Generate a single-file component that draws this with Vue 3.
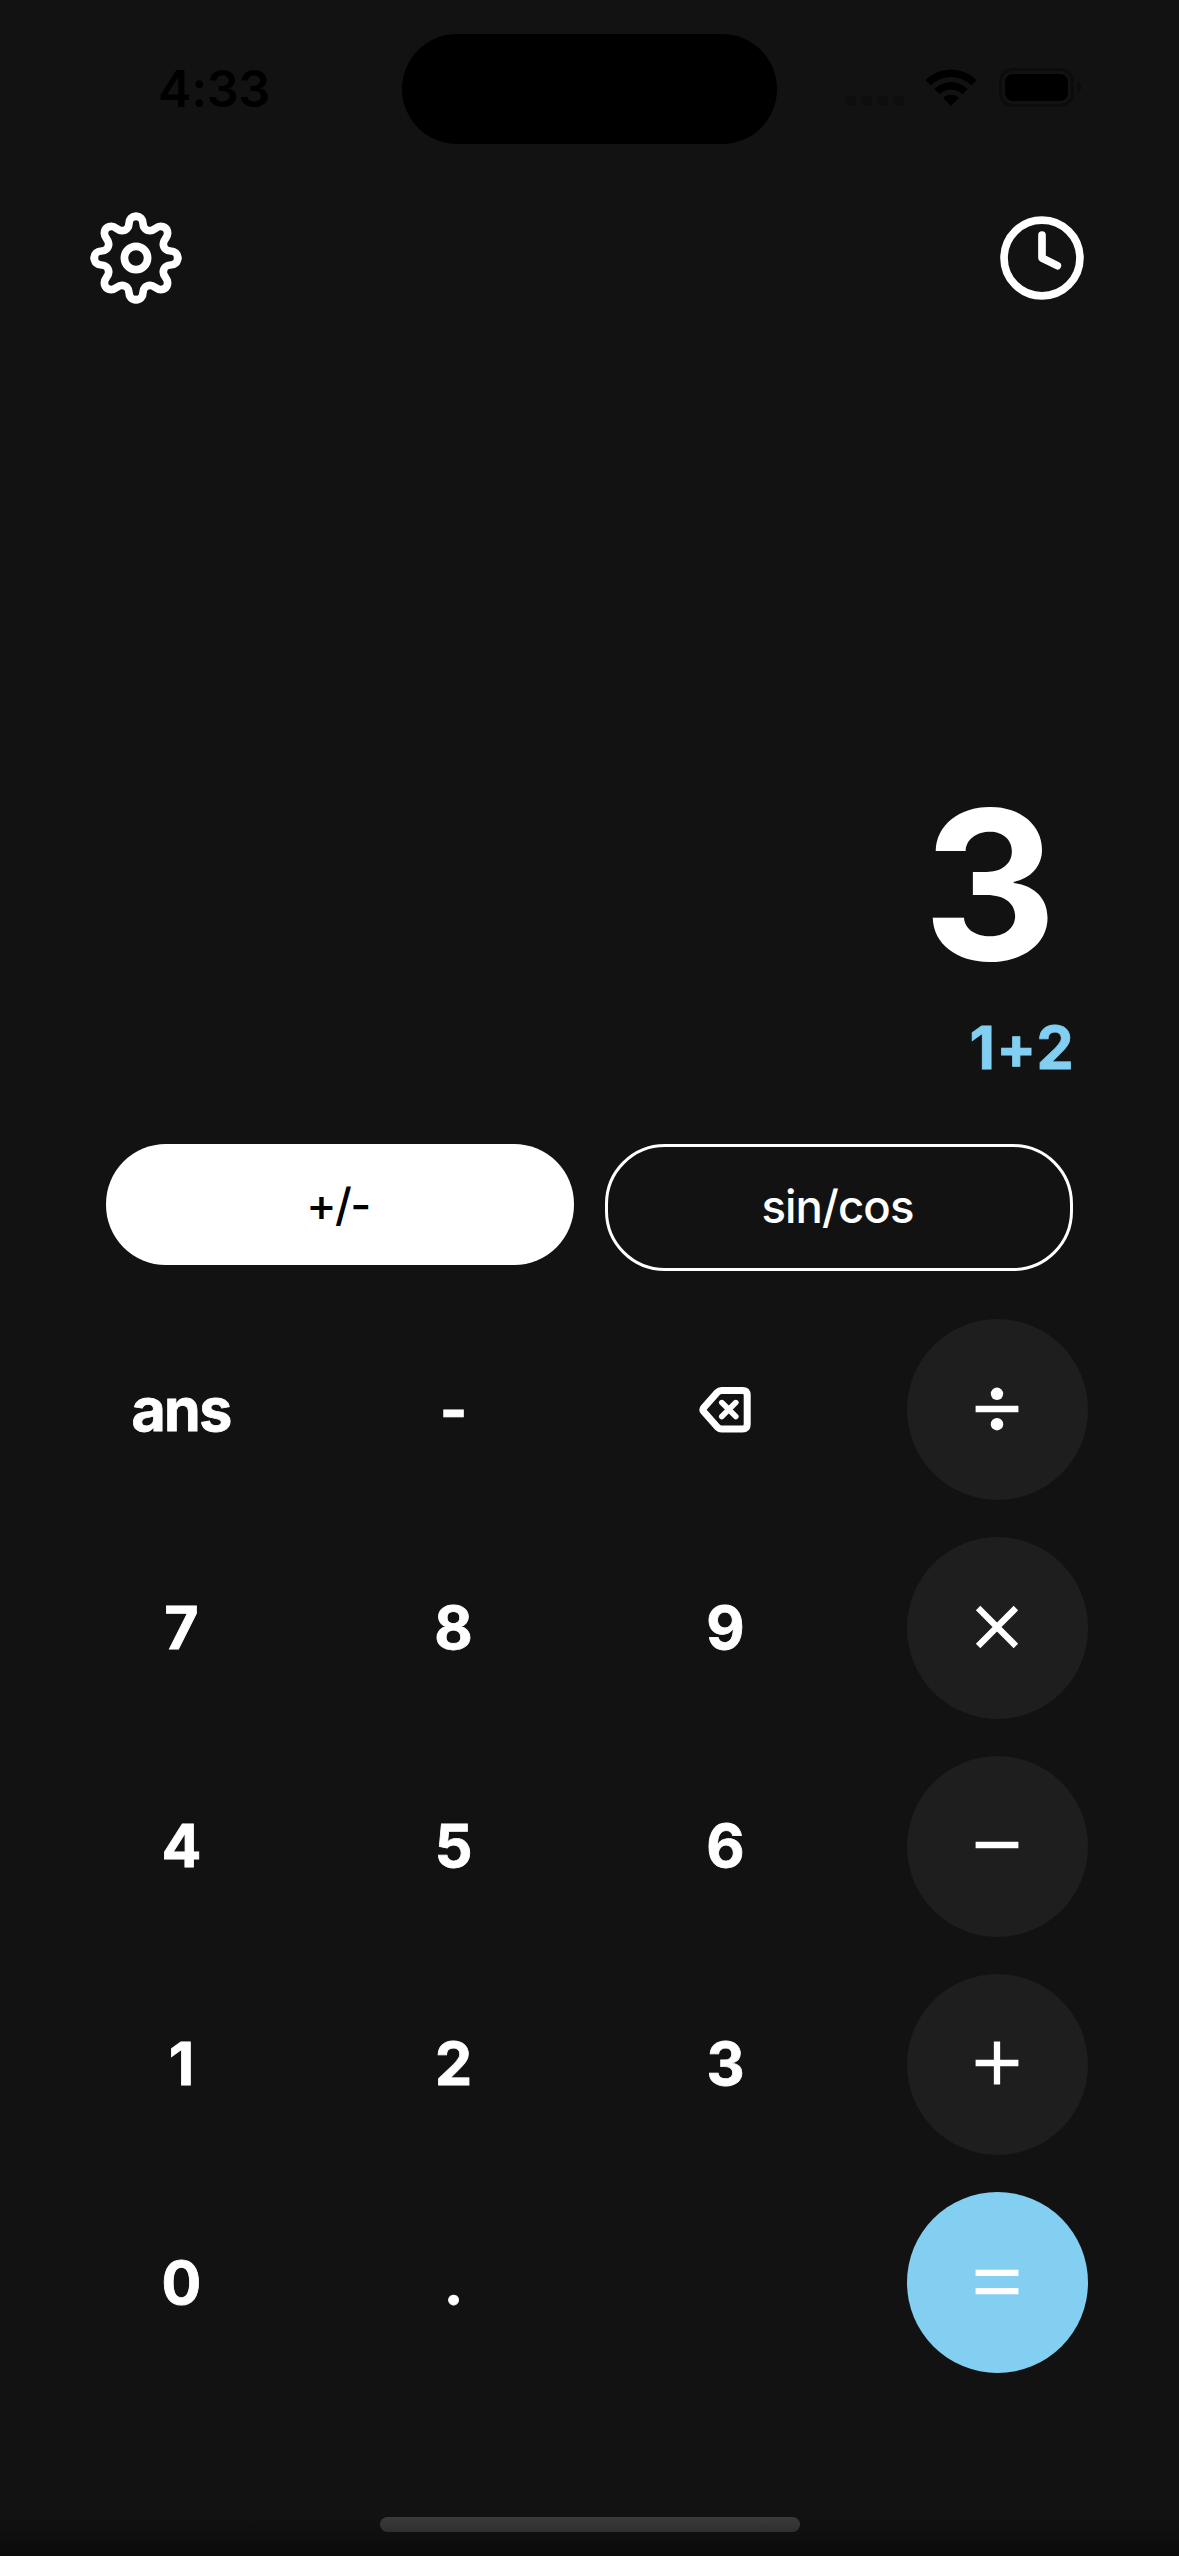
<script setup>
const keys = [
  { t: 'ans' }, { t: '-' }, { icon: 'back' }, { icon: 'div', op: true },
  { t: '7' }, { t: '8' }, { t: '9' }, { icon: 'mul', op: true },
  { t: '4' }, { t: '5' }, { t: '6' }, { icon: 'sub', op: true },
  { t: '1' }, { t: '2' }, { t: '3' }, { icon: 'add', op: true },
  { t: '0' }, { t: '.' }, {}, { icon: 'eq', op: true, accent: true },
]
// One quarter of the gear outline: half tooth, valley, diagonal tooth, valley, half tooth
const tooth =
  'M0-41.7C4.5-41.7 7-38.5 7-34.5C7-31 9.5-27.3 14.2-27.3C18.5-27.3 20-31.6 24.5-31.6C29-31.6 31.6-29 31.6-24.5C31.6-20 27.3-18.5 27.3-14.2C27.3-9.5 31-7 34.5-7C38.5-7 41.7-4.5 41.7 0'
</script>

<template>
  <main class="screen">
    <header class="status">
      <div class="time">4:33</div>
      <div class="island"></div>
      <div class="indicators">
        <div class="dots"><i v-for="n in 4" :key="n"></i></div>
        <svg class="wifi" width="52" height="39" viewBox="0 0 52 39">
          <path d="M0.5 12.2A36 36 0 0 1 51.5 12.2L46.3 17.4A28.7 28.7 0 0 0 5.7 17.4Z" />
          <path d="M9.3 21A23.6 23.6 0 0 1 42.7 21L37.5 26.2A16.3 16.3 0 0 0 14.5 26.2Z" />
          <path d="M18.2 29.9A11 11 0 0 1 33.8 29.9L26 38Z" />
        </svg>
        <svg class="battery" width="84" height="40" viewBox="0 0 84 40">
          <rect x="1.5" y="1.5" width="72" height="36" rx="12" fill="none" stroke="#0c0c0c" stroke-width="3" />
          <rect x="6" y="6" width="63" height="27" rx="8" />
          <path d="M78 13.5C83.4 15.5 83.4 23.5 78 25.5Z" fill="#0c0c0c" />
        </svg>
      </div>
    </header>

    <nav class="toolbar">
      <svg width="92" height="92" viewBox="-46 -46 92 92" class="line">
        <path v-for="q in 4" :key="q" :d="tooth" :transform="`rotate(${q * 90})`" />
        <circle r="11.6" />
      </svg>
      <svg width="92" height="92" viewBox="0 0 24 24" class="line clock">
        <circle cx="12" cy="12" r="9.9" />
        <path d="M12 6v6l4 2" />
      </svg>
    </nav>

    <section class="display">
      <div class="result">3</div>
      <div class="expr">1+2</div>
    </section>

    <section class="modes">
      <button class="pill filled">+/-</button>
      <button class="pill outlined">sin/cos</button>
    </section>

    <section class="pad">
      <button v-for="(k, i) in keys" :key="i" class="key" :class="{ op: k.op, accent: k.accent, word: k.t === 'ans' }">
        <span v-if="k.t">{{ k.t }}</span>
        <svg v-else-if="k.icon === 'back'" width="52" height="46" viewBox="0 0 52 46" class="back">
          <path d="M4.8 20.6L18.5 5.2Q20.2 3.5 22.5 3.5H43.5Q48.2 3.5 48.2 8.2V37.3Q48.2 42 43.5 42H22.5Q20.2 42 18.5 40.3L4.8 24.8Q3 22.7 4.8 20.6Z" />
          <path d="M22.8 15.6L36.8 29.6M36.8 15.6L22.8 29.6" stroke-width="5.6" />
        </svg>
        <svg v-else-if="k.icon" width="44" height="44" viewBox="-22 -22 44 44" class="sign">
          <template v-if="k.icon === 'div'">
            <path d="M-21.4 0H21.4" />
            <circle cy="-15.2" r="6.2" />
            <circle cy="15.2" r="6.2" />
          </template>
          <path v-if="k.icon === 'mul'" d="M-18.9-18.9L18.9 18.9M18.9-18.9L-18.9 18.9" />
          <path v-if="k.icon === 'sub'" d="M-21.4 0H21.4" />
          <path v-if="k.icon === 'add'" d="M-21.4 0H21.4M0-21.4V21.4" />
          <path v-if="k.icon === 'eq'" d="M-21.4-9.1H21.4M-21.4 9.1H21.4" />
        </svg>
      </button>
    </section>

    <footer class="home"><div class="bar"></div></footer>
  </main>
</template>

<style>
body { background: #121212; }
</style>

<style scoped>
.screen {
  box-sizing: border-box;
  width: 1179px;
  height: 2556px;
  overflow: hidden;
  display: flex;
  flex-direction: column;
  background: linear-gradient(#121212 0 2515px, #0b0b0b 2556px);
  color: #fff;
  font-family: Inter, "Liberation Sans", sans-serif;
}
button { border: 0; margin: 0; padding: 0; background: none; color: inherit; font: inherit; }
svg { display: block; flex: none; }

.status { height: 144px; display: flex; align-items: flex-start; color: #000; }
.time {
  width: 402px;
  box-sizing: border-box;
  padding: 58.5px 0 0 158px;
  font-size: 50.5px;
  line-height: 60px;
  font-weight: 600;
  letter-spacing: -0.5px;
}
.island { width: 375px; height: 110px; margin-top: 34px; border-radius: 55px; background: #000; }
.indicators { display: flex; padding: 68px 0 0 69px; }
.dots { display: flex; gap: 6px; padding-top: 28px; }
.dots i { width: 10px; height: 10px; border-radius: 3.5px; background: #0e0e0e; }
.wifi { margin-left: 21px; }
.battery { margin-left: 22px; }

.toolbar { display: flex; justify-content: space-between; padding: 68px 91px 0 90px; }
.line { fill: none; stroke: #fff; stroke-width: 7.7; stroke-linecap: round; stroke-linejoin: round; }
.clock { stroke-width: 2; }

.display {
  height: 840px;
  box-sizing: border-box;
  padding-right: 106px;
  display: flex;
  flex-direction: column;
  justify-content: flex-end;
  align-items: flex-end;
  font-weight: 700;
}
.result { font-size: 208px; line-height: 208px; padding-right: 16px; font-weight: 700; }
.expr {
  margin: 24px -2px 0 0;
  padding-bottom: 60px;
  font-size: 59px;
  line-height: 72px;
  color: #82cff2;
  letter-spacing: 1.4px;
  -webkit-text-stroke: 0.8px #82cff2;
}

.modes { display: flex; align-items: flex-start; gap: 31px; padding: 0 106px; }
.pill { width: 468px; font-size: 45.5px; font-weight: 500; border-radius: 60px; box-sizing: border-box; }
.filled { height: 121px; padding-right: 4px; background: #fff; color: #000; letter-spacing: -1.6px; }
.outlined { height: 127px; border: 3px solid #fff; padding: 0 3px 2px 0; letter-spacing: -0.9px; }

.pad {
  margin-top: 48.3px;
  padding: 0 91px;
  display: grid;
  grid-template-columns: repeat(4, 181px);
  grid-auto-rows: 181.2px;
  justify-content: space-between;
  row-gap: 37px;
}
.key {
  display: flex;
  align-items: center;
  justify-content: center;
  border-radius: 50%;
  font-size: 59px;
  font-weight: 700;
}
.key span { margin-top: -1px; -webkit-text-stroke: 0.8px #fff; }
.word { letter-spacing: -1.6px; padding-right: 1px; }
.op { background: #1e1e1e; }
.accent { background: #82cff2; }
.sign { margin: -2px 2px 0 0; fill: #fff; stroke: none; overflow: visible; }
.sign path { stroke: #fff; stroke-width: 6.3; fill: none; }
.back { fill: none; stroke: #fff; stroke-width: 7; stroke-linecap: round; stroke-linejoin: round; margin-right: 2px; }

.home { margin-top: auto; padding-bottom: 24px; display: flex; justify-content: center; }
.bar { width: 420px; height: 15px; border-radius: 8px; background: linear-gradient(#3b3b3b, #2f2f2f); }
</style>
